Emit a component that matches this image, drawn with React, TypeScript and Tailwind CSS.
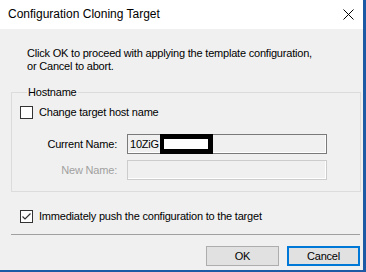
import React, { useState } from 'react';

function Checkbox({ checked, label, onToggle }: { checked: boolean; label: string; onToggle: () => void }) {
  return (
    <label className="flex items-center h-[13px] cursor-default" onClick={onToggle}>
      <span className="w-[13px] h-[13px] border border-[#333333] bg-white flex items-center justify-center shrink-0">
        {checked && (
          <svg width="11" height="11" viewBox="0 0 11 11">
            <polyline points="1.5,5.5 4,8 9.5,2.5" fill="none" stroke="#333333" strokeWidth="1.2" />
          </svg>
        )}
      </span>
      <span className="ml-[6px]">{label}</span>
    </label>
  );
}

export default function App() {
  const [changeHost, setChangeHost] = useState(false);
  const [pushNow, setPushNow] = useState(true);

  return (
    <div
      className="w-[366px] h-[272px] bg-[#f0f0f0] text-[11px] leading-[13px] tracking-[-0.2px] text-black flex flex-col border-r-[3px] border-b-[2px] border-[#1d5aa6] overflow-hidden"
      style={{ fontFamily: '"Liberation Sans", Arial, sans-serif' }}
    >
      {/* Title bar */}
      <div className="h-[29px] bg-white flex items-center justify-between shrink-0 tracking-normal">
        <span className="ml-[8px] text-[12px] text-[#000000]">Configuration Cloning Target</span>
        <svg width="11" height="11" viewBox="0 0 11 11" className="mr-[9px]">
          <path d="M0.5 0.5 L10.5 10.5 M10.5 0.5 L0.5 10.5" stroke="#000" strokeWidth="1" />
        </svg>
      </div>

      {/* Message */}
      <div className="ml-[27px] mt-[18px]">
        <p>Click OK to proceed with applying the template configuration,</p>
        <p>or Cancel to abort.</p>
      </div>

      {/* Hostname group */}
      <fieldset className="mt-[13px] ml-[11px] mr-[2px] border border-[#dcdcdc] px-[8px] pb-[11px]">
        <legend className="ml-[7px] px-[1px]">Hostname</legend>
        <div className="mt-[7px]">
          <Checkbox checked={changeHost} label="Change target host name" onToggle={() => setChangeHost(!changeHost)} />
        </div>

        <div className="flex items-center mt-[15px]">
          <span className="w-[97px] text-right">Current Name:</span>
          <div className="ml-[10px] w-[200px] h-[20px] border border-[#7a7a7a] bg-[#f0f0f0] shadow-[inset_-1px_-1px_0_#ffffff] flex items-center">
            <span className="ml-[2px]">10ZiG</span>
            <span className="ml-[1px] w-[53px] h-[20px] -my-px bg-black flex items-center justify-center">
              <span className="w-[44px] h-[10px] bg-white" />
            </span>
          </div>
        </div>

        <div className="flex items-center mt-[6px]">
          <span className="w-[97px] text-right text-[#a0a0a0]">New Name:</span>
          <div className="ml-[10px] w-[200px] h-[20px] border border-[#cccccc] bg-[#f0f0f0] shadow-[inset_-1px_-1px_0_#ffffff]" />
        </div>
      </fieldset>

      {/* Push option */}
      <div className="ml-[20px] mt-[18px]">
        <Checkbox checked={pushNow} label="Immediately push the configuration to the target" onToggle={() => setPushNow(!pushNow)} />
      </div>

      <div className="ml-[11px] mr-[3px] mt-[11px] h-px bg-[#a0a0a0]" />

      {/* Buttons */}
      <div className="flex justify-end gap-[8px] mr-[3px] mt-[11px]">
        <button className="w-[73px] h-[20px] bg-[#e1e1e1] border border-[#adadad] text-[11px] leading-none">OK</button>
        <button className="w-[73px] h-[20px] bg-[#e1e1e1] border-2 border-[#0078d7] text-[11px] leading-none">Cancel</button>
      </div>
    </div>
  );
}
